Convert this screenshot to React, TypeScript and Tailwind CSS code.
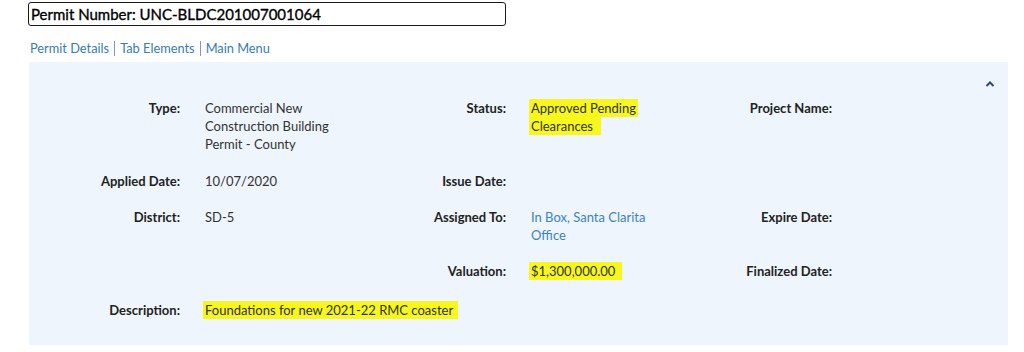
import React from "react";

const Label = ({ children }: { children?: React.ReactNode }) => (
  <div className="w-[151px] shrink-0 text-right font-bold text-[#222]">{children}</div>
);

const Cell = ({ label, children }: { label?: string; children?: React.ReactNode }) => (
  <div className="flex w-[326px] shrink-0">
    <Label>{label}</Label>
    <div className="w-[175px] shrink-0 pl-[25px] pr-[20px] text-[#333]">{children}</div>
  </div>
);

const Hl = ({ children, className = "" }: { children: React.ReactNode; className?: string }) => (
  <span className={"bg-[#f7f71e] " + className}>{children}</span>
);

export default function App() {
  return (
    <div
      className="w-[1024px] h-[352px] bg-white overflow-hidden"
      style={{ fontFamily: "Lato, 'Open Sans', sans-serif" }}
    >
      <div className="pt-[2px] pl-[28px]">
        <div className="w-[478px] h-[24px] border-[1.5px] border-[#1a1a1a] rounded-[3px] pl-[2px] flex items-center text-[15px] font-normal text-black leading-none [-webkit-text-stroke:0.35px_#000]">
          Permit Number: UNC-BLDC201007001064
        </div>
        <div className="mt-[13px] flex items-center text-[12.8px] text-[#3a7bb0] leading-[18px]">
          <span className="pl-[2px]">Permit Details</span>
          <span className="mx-[5px] h-[15px] w-px bg-[#7a9cbf]" />
          <span>Tab Elements</span>
          <span className="mx-[5px] h-[15px] w-px bg-[#7a9cbf]" />
          <span>Main Menu</span>
        </div>
      </div>

      <div className="relative ml-[29px] mt-[5px] w-[979px] h-[283px] bg-[#eef5fc] pt-[37px] text-[13px] leading-[18px]">
        <svg
          className="absolute right-[13px] top-[18px]"
          width="10"
          height="8"
          viewBox="0 0 10 8"
        >
          <path d="M1.5 6 L5 2.5 L8.5 6" fill="none" stroke="#2b4d70" strokeWidth="2" />
        </svg>

        <div className="flex">
          <Cell label="Type:">
            Commercial New Construction Building Permit - County
          </Cell>
          <Cell label="Status:">
            <div className="flex flex-col items-start -ml-[2px]">
              <Hl className="px-[2px]">Approved Pending</Hl>
              <Hl className="pl-[2px] pr-[8px]">Clearances</Hl>
            </div>
          </Cell>
          <Cell label="Project Name:" />
        </div>

        <div className="flex mt-[19px]">
          <Cell label="Applied Date:">10/07/2020</Cell>
          <Cell label="Issue Date:" />
        </div>

        <div className="flex mt-[18px]">
          <Cell label="District:">SD-5</Cell>
          <Cell label="Assigned To:">
            <span className="text-[#3d83bf]">In Box, Santa Clarita Office</span>
          </Cell>
          <Cell label="Expire Date:" />
        </div>

        <div className="flex mt-[18px]">
          <Cell />
          <Cell label="Valuation:">
            <Hl className="-ml-[2px] pl-[2px] pr-[7px] py-[1px]">$1,300,000.00</Hl>
          </Cell>
          <Cell label="Finalized Date:" />
        </div>

        <div className="flex mt-[21px]">
          <Label>Description:</Label>
          <div className="pl-[25px] text-[#333]">
            <Hl className="-ml-[2px] pl-[2px] pr-[5px] py-[1px]">Foundations for new 2021-22 RMC coaster</Hl>
          </div>
        </div>
      </div>
    </div>
  );
}
